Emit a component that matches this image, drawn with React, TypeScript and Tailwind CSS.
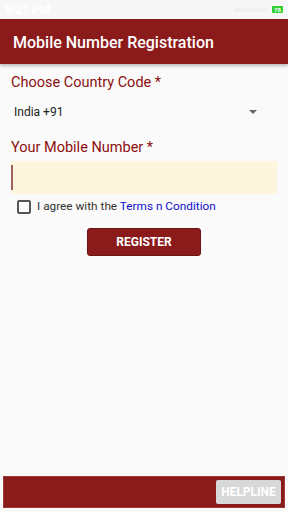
import { useState } from "react";

export default function App() {
  const [agreed, setAgreed] = useState(false);

  return (
    <div className="flex h-[512px] w-[288px] flex-col bg-[#fafafa] font-['Roboto',_'Liberation_Sans',_sans-serif]">
      <div className="flex h-[19px] items-center justify-between bg-[#f7f7f7] px-[5px] shadow-[0_1px_1px_rgba(0,0,0,0.15)]">
        <span className="text-[12px] font-bold text-white">9:27 PM</span>
        <div className="flex items-center gap-[4px]">
          <span className="h-[4px] w-[34px] rounded-sm bg-[#f0f0f0]" />
          <span className="flex h-[7px] items-center rounded-[1px] bg-[#2fd02f] px-[2px] text-[6px] font-bold leading-none text-white">
            78
          </span>
        </div>
      </div>

      <header className="flex h-[45px] items-center bg-[#8b1a1a] px-[13px] pt-[3px] shadow-[0_2px_3px_rgba(0,0,0,0.25)]">
        <h1 className="text-[16px] font-medium text-white">Mobile Number Registration</h1>
      </header>

      <main className="flex flex-col px-[11px] pt-[9px]">
        <label className="text-[14.5px] leading-[20px] text-[#8b1010]">Choose Country Code *</label>

        <div className="mt-[9px] flex h-[20px] items-center justify-between pl-[3px] pr-[20px]">
          <span className="text-[12px] text-[#222]">India +91</span>
          <span className="h-0 w-0 border-x-[4px] border-t-[4px] border-x-transparent border-t-[#666]" />
        </div>

        <label className="mt-[16px] text-[14.5px] leading-[20px] text-[#8b1010]">Your Mobile Number *</label>

        <div className="mt-[3px] flex h-[33px] w-[266px] items-center bg-[#fdf5dc]">
          <span className="h-[25px] w-[2px] bg-[#a2625c]" />
        </div>

        <div className="mt-[6px] flex h-[14px] items-center pl-[6px]">
          <button
            onClick={() => setAgreed(!agreed)}
            className="h-[14px] w-[14px] rounded-[2px] border-2 border-[#555]"
          >
            {agreed && <span className="block h-full w-full bg-[#8b1a1a]" />}
          </button>
          <span className="ml-[6px] text-[11.8px] text-[#333]">
            I agree with the <span className="text-[#1010cc]">Terms n Condition</span>
          </span>
        </div>

        <button className="mx-auto mt-[14px] h-[28px] w-[114px] rounded-[3px] border border-[#6e1414] bg-[#8b1a1a] text-[12px] font-bold text-white">
          REGISTER
        </button>
      </main>

      <footer className="mx-[3px] mb-[4px] mt-auto flex h-[32px] items-center justify-end border border-[#a03a3a] bg-[#8b1a1a] px-[3px]">
        <button className="h-[24px] w-[65px] rounded-[2px] bg-[#d8d8d8] text-[12px] font-bold text-white">
          HELPLINE
        </button>
      </footer>
    </div>
  );
}
